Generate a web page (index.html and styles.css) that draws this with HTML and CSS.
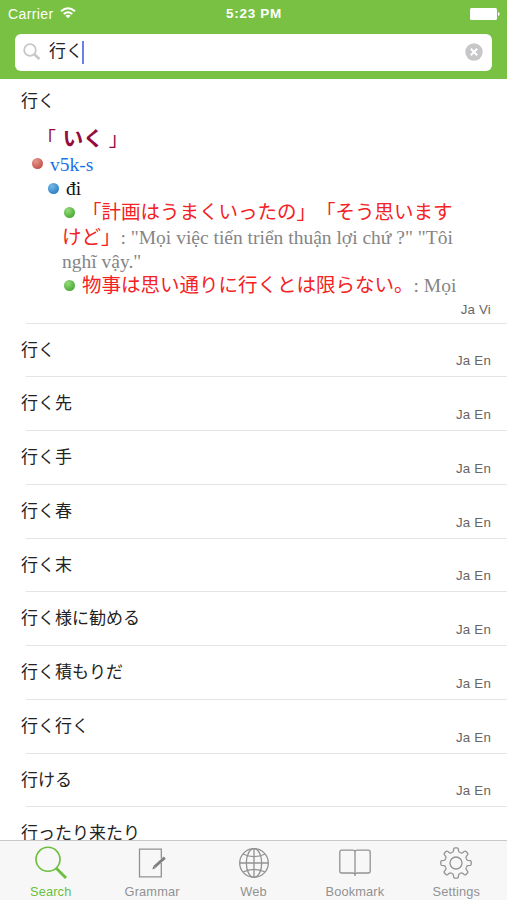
FILE: index.html
```html
<!DOCTYPE html>
<html lang="ja">
<head>
<meta charset="utf-8">
<title>Dictionary</title>
<link rel="stylesheet" href="styles.css">
</head>
<body>
<div class="app">
  <header class="header">
    <div class="status">
      <div class="carrier"><span>Carrier</span>
        <svg width="16" height="12" viewBox="0 0 16 12" fill="none" stroke="#fff" stroke-width="2"><path d="M1 4.2Q8-1.8 15 4.2M3.7 7Q8 3.4 12.3 7"/><path d="M8 11.2L5.4 8.8Q8 6.9 10.6 8.8Z" fill="#fff" stroke="none"/></svg>
      </div>
      <div class="time">5:23 PM</div>
      <div class="battery"><svg width="30" height="12" viewBox="0 0 30 12" fill="#fff"><rect width="27" height="12" rx="1.5"/><path d="M28 4Q29.7 4.5 29.7 6T28 8Z"/></svg></div>
    </div>
    <div class="field">
      <svg class="lens" width="18" height="18" viewBox="0 0 18 18" fill="none" stroke="#c6c7cb"><circle cx="7" cy="7" r="5.8" stroke-width="1.8"/><path d="M11.3 11.3L16.5 16" stroke-width="2.6"/></svg>
      <span class="query">行く</span><span class="caret"></span>
      <svg class="clear" width="18" height="18" viewBox="0 0 18 18"><circle cx="9" cy="9" r="8.7" fill="#c7c7c9"/><path d="M5.8 5.8L12.2 12.2M12.2 5.8L5.8 12.2" stroke="#fff" stroke-width="2"/></svg>
    </div>
  </header>
  <main class="results">
    <article class="entry">
      <h2 class="word">行く</h2>
      <div class="definition">
        <div class="reading"><span class="bracket">「</span> <b>いく</b> <span class="bracket">」</span></div>
        <div class="line pos"><i class="dot red"></i>v5k-s</div>
        <div class="line sense"><i class="dot blue"></i>đi</div>
        <div class="line example"><i class="dot green"></i><span class="ja">「計画はうまくいったの」「そう思います</span></div>
        <div class="line example"><span class="ja">けど」</span>: "Mọi việc tiến triển thuận lợi chứ ?" "Tôi</div>
        <div class="line example">nghĩ vậy."</div>
        <div class="line example"><i class="dot green"></i><span class="ja">物事は思い通りに行くとは限らない。</span>: Mọi</div>
      </div>
      <span class="lang">Ja Vi</span>
    </article>
    <article class="row"><span>行く</span><span class="lang">Ja En</span></article>
    <article class="row"><span>行く先</span><span class="lang">Ja En</span></article>
    <article class="row"><span>行く手</span><span class="lang">Ja En</span></article>
    <article class="row"><span>行く春</span><span class="lang">Ja En</span></article>
    <article class="row"><span>行く末</span><span class="lang">Ja En</span></article>
    <article class="row"><span>行く様に勧める</span><span class="lang">Ja En</span></article>
    <article class="row"><span>行く積もりだ</span><span class="lang">Ja En</span></article>
    <article class="row"><span>行く行く</span><span class="lang">Ja En</span></article>
    <article class="row"><span>行ける</span><span class="lang">Ja En</span></article>
    <article class="row"><span>行ったり来たり</span><span class="lang">Ja En</span></article>
  </main>
  <nav class="tabs">
    <div class="tab active">
      <svg width="34" height="34" viewBox="0 0 34 34"><circle cx="14" cy="13.3" r="12" stroke-width="1.6"/><path d="M22.3 22.3L32 32" stroke-width="2.8"/></svg>
      <span>Search</span>
    </div>
    <div class="tab">
      <svg width="34" height="34" viewBox="0 0 34 34"><path d="M26.3 12.5V3.2H4.5V30.8H26.3V17"/><path d="M19.4 21L29.8 11.6" stroke="#808080" stroke-width="3"/><path d="M17.3 23.4L18.4 19.9L20.5 22.2Z" fill="#808080" stroke="none"/></svg>
      <span>Grammar</span>
    </div>
    <div class="tab">
      <svg width="34" height="34" viewBox="0 0 34 34"><circle cx="17" cy="17" r="14.3"/><ellipse cx="17" cy="17" rx="7.7" ry="14.3"/><path d="M17 2.7V31.3M2.7 17H31.3M5.8 8Q17 13.2 28.2 8M5.8 26Q17 20.8 28.2 26"/></svg>
      <span>Web</span>
    </div>
    <div class="tab">
      <svg width="34" height="34" viewBox="0 0 34 34"><path d="M17 5.8Q16.5 4.2 14.8 4.2H3.8Q1.8 4.2 1.8 6.2V25Q1.8 27 3.8 27H14.8Q16.5 27 17 28.3Q17.5 27 19.2 27H30.2Q32.2 27 32.2 25V6.2Q32.2 4.2 30.2 4.2H19.2Q17.5 4.2 17 5.8V30"/></svg>
      <span>Bookmark</span>
    </div>
    <div class="tab">
      <svg width="34" height="34" viewBox="-17 -17 34 34"><defs><path id="tooth" d="M-4.4-10.6Q-2.9-10.4-2.6-12L-2.3-14.2Q-2.1-15.2-1.1-15.2H1.1Q2.1-15.2 2.3-14.2L2.6-12Q2.9-10.4 4.4-10.6"/></defs><circle r="6"/><use href="#tooth"/><use href="#tooth" transform="rotate(45)"/><use href="#tooth" transform="rotate(90)"/><use href="#tooth" transform="rotate(135)"/><use href="#tooth" transform="rotate(180)"/><use href="#tooth" transform="rotate(225)"/><use href="#tooth" transform="rotate(270)"/><use href="#tooth" transform="rotate(315)"/></svg>
      <span>Settings</span>
    </div>
  </nav>
</div>
</body>
</html>
```
FILE: styles.css
```css
* { box-sizing: border-box; }
body { margin: 0; background: #fff; color: #222; font-family: "Liberation Sans", "Noto Sans CJK JP", sans-serif; }
svg { display: block; flex: none; }
.app { width: 507px; height: 900px; display: flex; flex-direction: column; overflow: hidden; }
.header { height: 79px; background: #79c143; flex: none; }
.status { height: 34px; padding: 0 7px 6px 8px; display: grid; grid-template-columns: 1fr auto 1fr; align-items: center; color: #fff; font-size: 14px; line-height: 16px; }
.carrier { display: flex; align-items: center; gap: 6px; letter-spacing: .4px; }
.carrier svg { margin-top: -2px; }
.time { font-weight: 700; font-size: 13.5px; letter-spacing: .7px; }
.battery { justify-self: end; }
.field { height: 36.5px; margin: 0 15px; padding: 0 9px 0 8px; display: flex; align-items: center; background: #fff; border-radius: 6px; }
.query { margin-left: 8px; font-size: 17px; line-height: 24px; }
.caret { width: 2px; height: 23px; background: #6a80e2; margin-left: -1px; }
.clear { margin-left: auto; }
.results { flex: 1; min-height: 0; overflow: hidden; }
.entry { height: 244.5px; position: relative; padding-left: 21px; }
.word { margin: 0; padding-top: 11px; font-size: 17px; line-height: 24px; font-weight: 400; }
.definition { margin-left: -21px; padding-top: 11.5px; height: 184px; overflow: hidden; font-family: "Liberation Serif", "Noto Sans CJK JP", serif; font-size: 19.5px; color: #858585; white-space: nowrap; text-spacing-trim: space-all; }
.reading { padding-left: 37px; height: 27px; line-height: 27px; font-size: 20.5px; color: #940b3c; }
.bracket { display: inline-block; width: 20.5px; font-size: 19px; }
.line { height: 24.4px; line-height: 24.4px; display: flex; align-items: center; }
.pos { padding-left: 32px; color: #1873e8; }
.sense { padding-left: 48px; color: #111; }
.example { padding-left: 62px; }
.example .dot { margin-left: 2px; }
.ja { color: #f32224; }
.dot { width: 11px; height: 11px; margin: -2px 7px 0 0; border-radius: 50%; flex: none; }
.red { background: radial-gradient(circle at 35% 30%, #e6988f, #c0493f 85%); }
.blue { background: radial-gradient(circle at 35% 30%, #74b9e8, #2478bd 85%); }
.green { background: radial-gradient(circle at 35% 30%, #93dc78, #43a330 85%); }
.lang { font-size: 13.3px; line-height: 16px; color: #666; letter-spacing: .2px; }
.entry .lang { position: absolute; right: 16px; bottom: 6px; }
.entry::after { content: ""; position: absolute; left: 26px; right: 0; bottom: 0; height: 1px; background: #e4e4e4; }
.row { height: 53.75px; padding: 0 16px 8px 21px; display: flex; justify-content: space-between; align-items: flex-end; background: linear-gradient(#e4e4e4, #e4e4e4) 26px 100% / 100% 1px no-repeat; }
.row > span:first-child { align-self: flex-start; padding-top: 15px; font-size: 17px; line-height: 24px; }
.tabs { height: 60px; flex: none; display: flex; background: #f7f7f7; border-top: 1px solid #c8c8c8; }
.tab { flex: 1; display: flex; flex-direction: column; align-items: center; padding-top: 5px; color: #929292; font-size: 12.8px; line-height: 16px; letter-spacing: .15px; }
.tab svg { fill: none; stroke: currentColor; stroke-width: 1.3; margin-bottom: 4px; }
.active { color: #6bbf3b; }
```
